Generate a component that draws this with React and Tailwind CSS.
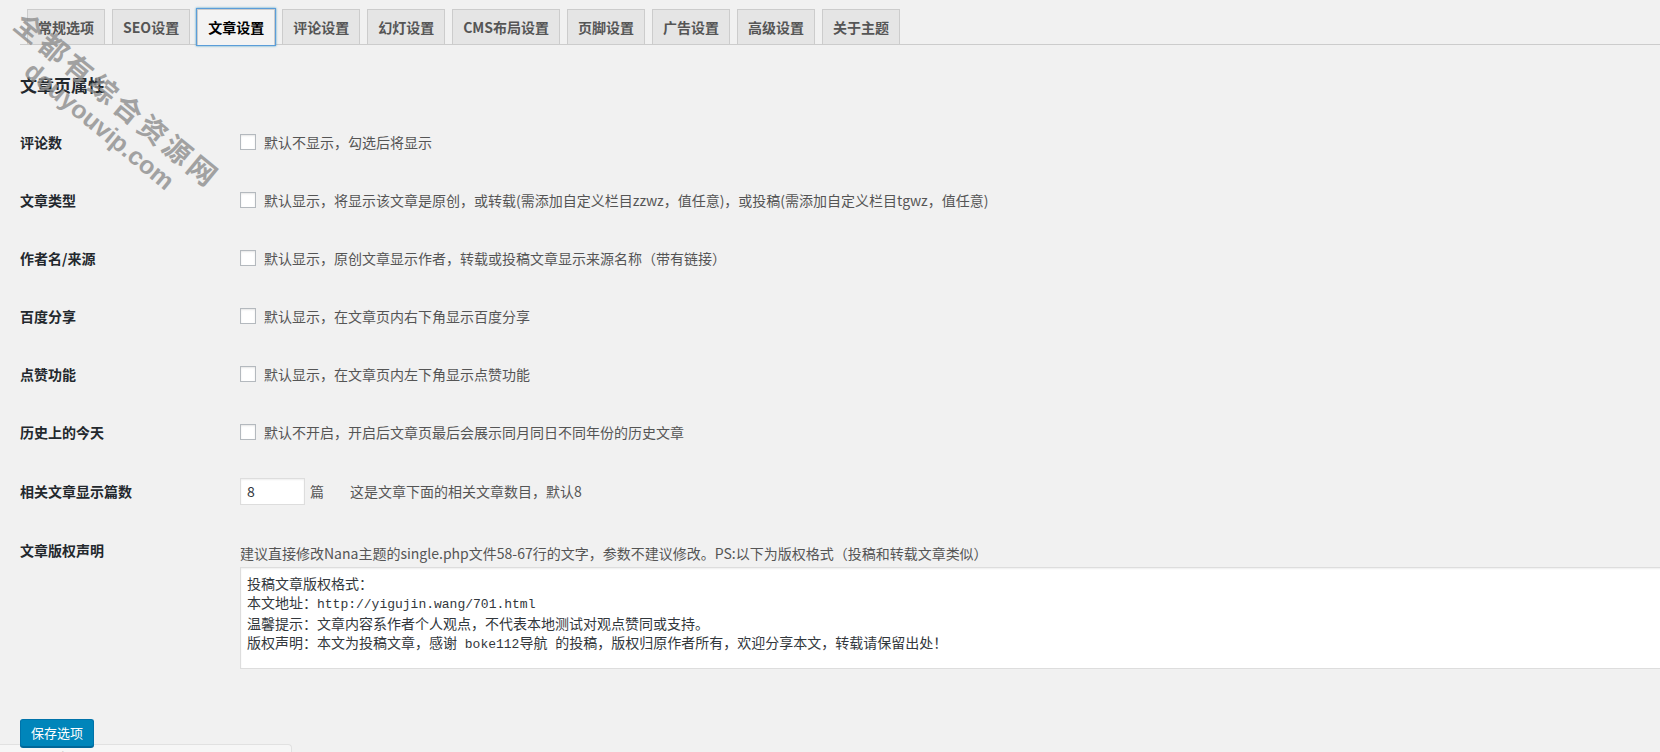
import React from "react";

const tabs = ["常规选项", "SEO设置", "文章设置", "评论设置", "幻灯设置", "CMS布局设置", "页脚设置", "广告设置", "高级设置", "关于主题"];

const checks = [
  ["评论数", "默认不显示，勾选后将显示"],
  ["文章类型", "默认显示，将显示该文章是原创，或转载(需添加自定义栏目zzwz，值任意)，或投稿(需添加自定义栏目tgwz，值任意)"],
  ["作者名/来源", "默认显示，原创文章显示作者，转载或投稿文章显示来源名称（带有链接）"],
  ["百度分享", "默认显示，在文章页内右下角显示百度分享"],
  ["点赞功能", "默认显示，在文章页内左下角显示点赞功能"],
  ["历史上的今天", "默认不开启，开启后文章页最后会展示同月同日不同年份的历史文章"],
];

function Mono({ children }) {
  return <span className="font-['Liberation_Mono',monospace] text-[13px] whitespace-pre">{children}</span>;
}

export default function App() {
  return (
    <div className="relative w-full h-[752px] overflow-hidden bg-[#f1f1f1] font-['Noto_Sans_CJK_SC',sans-serif] text-[#444]">
      {/* tabs */}
      <div className="ml-[20px] pt-[9px] border-b border-[#ccc] flex items-end">
        {tabs.map((t) =>
          t === "文章设置" ? (
            <div
              key={t}
              className="relative z-10 ml-[7px] -mb-px px-[10px] pt-[5px] pb-[6px] text-[14px] leading-[24px] font-semibold text-black bg-[#f3f3f3] border border-b-0 border-[#ccc] shadow-[0_0_0_1px_#5b9dd9,0_0_2px_1px_rgba(30,140,190,0.8)]"
            >
              {t}
            </div>
          ) : (
            <div
              key={t}
              className="ml-[7px] px-[10px] py-[5px] text-[14px] leading-[24px] font-semibold text-[#555] bg-[#e5e5e5] border border-b-0 border-[#ccc]"
            >
              {t}
            </div>
          )
        )}
      </div>

      <div className="pl-[20px]">
        <h2 className="mt-[29px] text-[17px] leading-[22px] font-bold text-[#23282d]">文章页属性</h2>

        <div className="mt-[17px]">
          {checks.map(([label, desc]) => (
            <div key={label} className="flex items-center h-[58px]">
              <div className="w-[220px] shrink-0 text-[14px] font-bold text-[#23282d]">{label}</div>
              <span className="w-4 h-4 shrink-0 border border-[#b4b9be] bg-white shadow-[inset_0_1px_2px_rgba(0,0,0,0.1)]"></span>
              <span className="ml-2 text-[14px] leading-[18px] text-[#555] whitespace-nowrap">{desc}</span>
            </div>
          ))}

          <div className="flex items-center h-[60px]">
            <div className="w-[220px] shrink-0 text-[14px] font-bold text-[#23282d]">相关文章显示篇数</div>
            <div className="w-[65px] h-[27px] shrink-0 border border-[#ddd] bg-white shadow-[inset_0_1px_2px_rgba(0,0,0,0.07)] pl-[6px] text-[14px] leading-[25px] text-[#32373c]">
              8
            </div>
            <span className="ml-[5px] text-[14px] text-[#555]">篇</span>
            <span className="ml-[26px] text-[14px] text-[#555]">这是文章下面的相关文章数目，默认8</span>
          </div>

          <div className="flex items-start">
            <div className="w-[220px] shrink-0 pt-[20px] text-[14px] leading-[18px] font-bold text-[#23282d]">文章版权声明</div>
            <div className="flex flex-col">
              <p className="pt-[23px] text-[14px] leading-[18px] text-[#555] whitespace-nowrap">
                建议直接修改Nana主题的single.php文件58-67行的文字，参数不建议修改。PS:以下为版权格式（投稿和转载文章类似）
              </p>
              <div className="mt-[5px] w-[1460px] h-[102px] border border-[#ddd] bg-white shadow-[inset_0_1px_2px_rgba(0,0,0,0.07)] pt-[6px] pl-[6px] text-[14px] leading-[19px] text-[#32373c] whitespace-nowrap">
                <div>投稿文章版权格式：</div>
                <div>
                  本文地址：<Mono>http://yigujin.wang/701.html</Mono>
                </div>
                <div>温馨提示：文章内容系作者个人观点，不代表本地测试对观点赞同或支持。</div>
                <div>
                  版权声明：本文为投稿文章，感谢<Mono>{" boke112"}</Mono>导航<Mono>{" "}</Mono>的投稿，版权归原作者所有，欢迎分享本文，转载请保留出处！
                </div>
              </div>
            </div>
          </div>
        </div>

        <button className="relative z-10 mt-[50px] h-[28px] px-[10px] text-[13px] leading-[26px] text-white bg-[#0085ba] border border-[#0073aa] border-b-[#006799] rounded-[3px] shadow-[0_1px_0_#006799]">
          保存选项
        </button>
      </div>

      {/* partly hidden panel at the bottom edge */}
      <div className="absolute left-0 top-[744px] w-[292px] h-[24px] bg-[#f6f6f6] border-t border-r border-[#e1e1e1] rounded-tr-[4px] pl-[30px] pt-[3px] text-[13px] leading-[18px] text-[#555] whitespace-nowrap overflow-hidden">
        Thank you for creating with WordPress.
      </div>

      {/* watermark */}
      <div className="pointer-events-none absolute left-[31px] top-[4px] origin-top-left rotate-[39.5deg] text-[#8e8e8e] opacity-80 font-bold whitespace-nowrap">
        <div className="text-[28px] leading-[36px] tracking-[4px]">全都有综合资源网</div>
        <div className="-mt-[3px] pl-[38px] text-[25px] leading-[34px] font-['Liberation_Sans',sans-serif]">douyouvip.com</div>
      </div>
    </div>
  );
}
